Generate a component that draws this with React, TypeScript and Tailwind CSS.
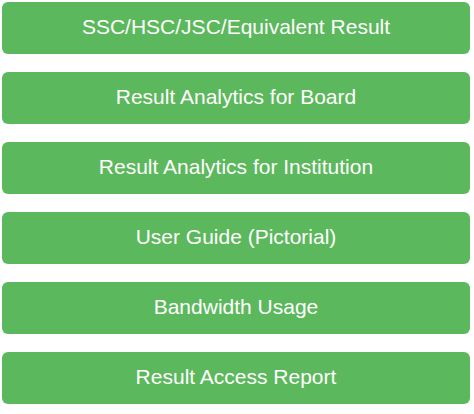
import React from "react";

const items = [
  "SSC/HSC/JSC/Equivalent Result",
  "Result Analytics for Board",
  "Result Analytics for Institution",
  "User Guide (Pictorial)",
  "Bandwidth Usage",
  "Result Access Report",
];

export default function App() {
  return (
    <div className="w-[474px] h-[414px] bg-white px-[2px] pt-[2px] flex flex-col gap-[18px]" style={{ fontFamily: '"Liberation Sans", Arial, sans-serif' }}>
      {items.map((t) => (
        <div key={t} className="h-[52px] w-[468px] rounded-[6px] bg-[#5cb85c] text-white text-[21px] pb-[2px] flex items-center justify-center">
          {t}
        </div>
      ))}
    </div>
  );
}
